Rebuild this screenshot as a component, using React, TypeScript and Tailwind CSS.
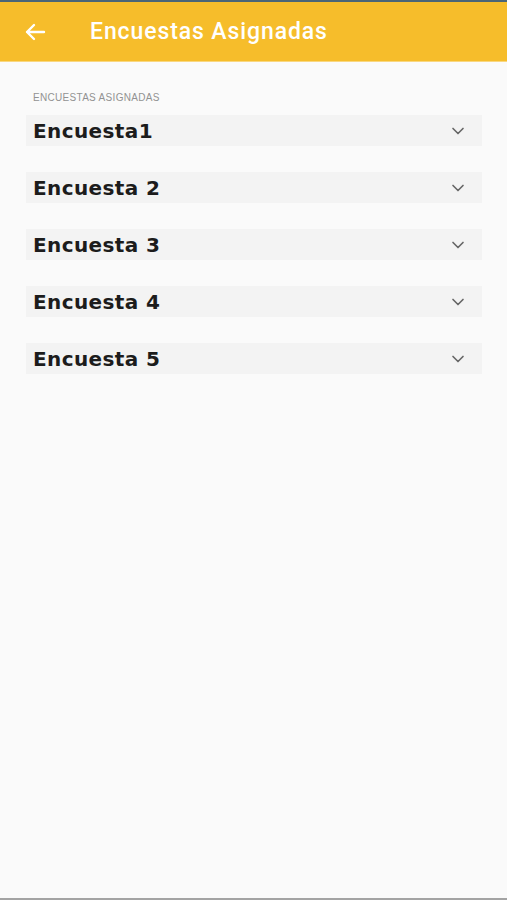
import { ChevronDown } from "lucide-react";

const surveys = ["Encuesta1", "Encuesta 2", "Encuesta 3", "Encuesta 4", "Encuesta 5"];

function BackArrow() {
  return (
    <svg width="22" height="18" viewBox="0 0 22 18" fill="none">
      <path
        d="M20 9H3M10 2L3 9l7 7"
        stroke="white"
        strokeWidth="2.4"
        strokeLinecap="round"
        strokeLinejoin="round"
      />
    </svg>
  );
}

export default function App() {
  return (
    <div className="flex h-[900px] w-full flex-col border-t-2 border-b-2 border-t-[#4a6577] border-b-[#a3a3a3] bg-[#fafafa] font-['Liberation_Sans',Arial,sans-serif]">
      <header className="flex h-[60px] shrink-0 items-center border-b border-b-[#f9d77f] bg-[#f6bd2b] pl-[24px]">
        <BackArrow />
        <h1 className="ml-[44px] mt-[2px] font-['Roboto',sans-serif] text-[23px] font-medium tracking-[0.9px] text-white">
          Encuestas Asignadas
        </h1>
      </header>

      <main className="flex flex-col pt-[30px]">
        <p className="ml-[33px] text-[10px] leading-[12px] tracking-[0.3px] text-[#929292]">
          ENCUESTAS ASIGNADAS
        </p>
        <ul className="mt-[11px] flex flex-col gap-[26px]">
          {surveys.map((s) => (
            <li
              key={s}
              className="ml-[26px] mr-[25px] flex h-[31px] items-center justify-between bg-[#f3f3f3] pl-[7px] pr-[14px]"
            >
              <span className="font-['DejaVu_Sans',sans-serif] text-[20px] font-bold tracking-[0.4px] text-[#1c1c1c]">
                {s}
              </span>
              <ChevronDown className="h-[20px] w-[20px] text-[#666]" strokeWidth={2} />
            </li>
          ))}
        </ul>
      </main>
    </div>
  );
}
